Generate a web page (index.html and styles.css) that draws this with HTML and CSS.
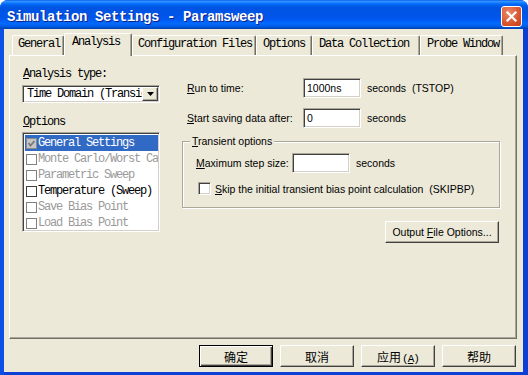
FILE: index.html
```html
<!DOCTYPE html>
<html lang="zh-CN">
<head>
  <meta charset="UTF-8" />
  <title>Simulation Settings - Paramsweep</title>
  <link rel="stylesheet" href="styles.css">
</head>
<body>
  <div class="window">
    <div class="titlebar">
      <span class="title">Simulation Settings - Paramsweep</span>
      <span class="close">
        <svg width="13" height="13" viewBox="0 0 13 13"><path d="M2.5 2.5 L10.5 10.5 M10.5 2.5 L2.5 10.5" stroke="#fff" stroke-width="2.2" stroke-linecap="square" fill="none"/></svg>
      </span>
    </div>

    <div class="client">
      <div class="tabs">
        <div class="tab tab-general">General</div>
        <div class="tab tab-analysis active">Analysis</div>
        <div class="tab tab-config">Configuration Files</div>
        <div class="tab tab-options">Options</div>
        <div class="tab tab-data">Data Collection</div>
        <div class="tab tab-probe">Probe Window</div>
      </div>

      <div class="panel">
        <div class="left">
          <div class="mono-label"><u>A</u>nalysis type:</div>
          <div class="select">
            <span class="select-text">Time Domain (Transient)</span>
            <span class="drop">
              <svg width="7" height="4" viewBox="0 0 7 4"><path d="M0 0 H7 L3.5 4 Z" fill="#000"/></svg>
            </span>
          </div>
          <div class="mono-label options-label"><u>O</u>ptions</div>
          <div class="listbox">
            <div class="item selected">
              <span class="cb checked">
                <svg width="9" height="9" viewBox="0 0 9 9"><path d="M1.5 4 L3.5 6.5 L7.5 2" stroke="#7a7a7a" stroke-width="1.8" fill="none"/></svg>
              </span>General Settings
            </div>
            <div class="item disabled"><span class="cb"></span>Monte Carlo/Worst Case</div>
            <div class="item disabled"><span class="cb"></span>Parametric Sweep</div>
            <div class="item"><span class="cb"></span>Temperature (Sweep)</div>
            <div class="item disabled"><span class="cb"></span>Save Bias Point</div>
            <div class="item disabled"><span class="cb"></span>Load Bias Point</div>
          </div>
        </div>

        <div class="right">
          <div class="row">
            <span class="field-label"><u>R</u>un to time:</span>
            <span class="input">1000ns</span>
            <span class="unit">seconds&nbsp; (TSTOP)</span>
          </div>
          <div class="row row-gap">
            <span class="field-label"><u>S</u>tart saving data after:</span>
            <span class="input">0</span>
            <span class="unit">seconds</span>
          </div>

          <div class="group">
            <div class="group-title"><u>T</u>ransient options</div>
            <div class="row">
              <span class="field-label short"><u>M</u>aximum step size:</span>
              <span class="input"></span>
              <span class="unit">seconds</span>
            </div>
            <div class="check-row">
              <span class="check"></span>
              <span><u>S</u>kip the initial transient bias point calculation&nbsp; (SKIPBP)</span>
            </div>
          </div>

          <div class="btn-row">
            <span class="btn output-btn"><span>Output <u>F</u>ile Options...</span></span>
          </div>
        </div>
      </div>

      <div class="footer">
        <span class="btn cjk default">确定</span>
        <span class="btn cjk">取消</span>
        <span class="btn cjk"><span>应用<span class="accel">(<u>A</u>)</span></span></span>
        <span class="btn cjk">帮助</span>
      </div>
    </div>
  </div>
</body>
</html>
```

FILE: styles.css
```css
* { box-sizing: border-box; }
body {
  margin: 0;
  width: 528px;
  height: 375px;
  overflow: hidden;
  background: #fff;
}
.window {
  width: 528px;
  height: 375px;
  display: flex;
  flex-direction: column;
  background: linear-gradient(to right, #0a50e4 0, #0a50e4 4px, #0b3fd6 4px);
  border-radius: 8px 8px 0 0;
  overflow: hidden;
}
.titlebar {
  height: 29px;
  flex: none;
  display: flex;
  align-items: center;
  padding: 4px 6px 0 7px;
  background: linear-gradient(to bottom, #0058ee 0%, #3593ff 4%, #288eff 7%, #127dff 10%, #036ffc 13%, #0262ee 17%, #0057e5 24%, #0054e3 30%, #0055eb 60%, #005bf5 70%, #026afe 80%, #0062ef 88%, #0052d6 94%, #0040ab 100%);
}
.title {
  flex: 1;
  font: bold 14px "Liberation Mono", monospace;
  letter-spacing: -0.4px;
  color: #fff;
  text-shadow: 1px 1px #0f1f86;
  white-space: nowrap;
}
.close {
  width: 21px;
  height: 21px;
  display: flex;
  align-items: center;
  justify-content: center;
  border: 1px solid #fff;
  border-radius: 3px;
  background: radial-gradient(circle at 35% 30%, #e98a6c, #d8542f 60%, #c23c17);
}

.client {
  flex: 1;
  margin: 0 5px 3px 4px;
  background: #ece9d8;
  display: flex;
  flex-direction: column;
}

/* tabs */
.tabs {
  display: flex;
  align-items: flex-end;
  height: 23px;
  margin-top: 4px;
  margin-bottom: -1px;
  padding-left: 8px;
  position: relative;
  z-index: 1;
}
.tab {
  height: 20px;
  margin-bottom: 1px;
  padding: 1px 0 0 5px;
  line-height: 14px;
  font-family: "Liberation Mono", monospace;
  font-size: 12px;
  letter-spacing: -1.2px;
  color: #000;
  background: #ece9d8;
  border-top: 1px solid #fff;
  border-left: 1px solid #fff;
  border-right: 1px solid #716f64;
  border-radius: 2px 2px 0 0;
  box-shadow: inset -1px 0 #aca899;
  white-space: nowrap;
}
.tab.active {
  height: 23px;
  margin-bottom: 0;
  padding-left: 7px;
}
.tab-general { width: 52px; }
.tab-analysis { width: 68px; }
.tab-config { width: 124px; }
.tab-options { width: 56px; padding-left: 6px; }
.tab-data { width: 108px; padding-left: 6px; }
.tab-probe { width: 83px; padding-left: 6px; }

.panel {
  height: 284px;
  margin: 0 6px 0 5px;
  display: flex;
  align-items: flex-start;
  border-top: 1px solid #fff;
  border-left: 1px solid #fff;
  border-right: 1px solid #716f64;
  border-bottom: 1px solid #716f64;
  box-shadow: inset -1px -1px #aca899;
}

/* left column */
.left {
  width: 138px;
  margin-left: 12px;
  padding-top: 11px;
}
.mono-label,
.select,
.listbox {
  font-family: "Liberation Mono", "Noto Sans CJK SC", monospace;
  font-size: 12px;
  letter-spacing: -1.2px;
}
.mono-label {
  line-height: 14px;
  padding-left: 1px;
  white-space: nowrap;
}
.select {
  margin-top: 4px;
  height: 18px;
  display: flex;
  background: #fff;
  border-top: 1px solid #aca899;
  border-left: 1px solid #aca899;
  border-right: 1px solid #fff;
  border-bottom: 1px solid #fff;
  box-shadow: inset 1px 1px #404040, inset -1px -1px #d4d0c8;
  padding: 1px;
}
.select-text {
  flex: 1;
  overflow: hidden;
  white-space: nowrap;
  line-height: 14px;
  padding-left: 3px;
}
.drop {
  width: 16px;
  height: 14px;
  display: flex;
  align-items: center;
  justify-content: center;
  background: #ece9d8;
  border-top: 1px solid #fff;
  border-left: 1px solid #fff;
  border-right: 1px solid #404040;
  border-bottom: 1px solid #404040;
  box-shadow: inset -1px -1px #aca899;
}
.options-label { margin-top: 12px; }
.listbox {
  margin-top: 3px;
  height: 100px;
  overflow: hidden;
  background: #fff;
  border-top: 1px solid #aca899;
  border-left: 1px solid #aca899;
  border-right: 1px solid #fff;
  border-bottom: 1px solid #fff;
  box-shadow: inset 1px 1px #404040, inset -1px -1px #d4d0c8;
  padding: 2px 1px 1px 2px;
}
.item {
  height: 16px;
  display: flex;
  align-items: center;
  white-space: nowrap;
  overflow: hidden;
  padding-left: 1px;
  color: #000;
}
.item.selected {
  background: #316ac5;
  color: #fff;
}
.item.disabled { color: #9a9a9a; }
.cb {
  width: 11px;
  height: 11px;
  flex: none;
  margin-right: 1px;
  border: 1px solid #808080;
  background: #fff;
  display: flex;
  align-items: center;
  justify-content: center;
}
.item:not(.disabled):not(.selected) .cb { border-color: #3c3c3c; }
.cb.checked {
  background: #c6c6c6;
  border-color: #8a8a8a;
}

/* right column */
.right {
  width: 318px;
  margin-left: 22px;
  padding-top: 22px;
  font-family: "Liberation Sans", Arial, sans-serif;
  font-size: 10.5px;
  color: #000;
}
.row {
  display: flex;
  align-items: center;
  height: 20px;
}
.row-gap { margin-top: 10px; }
.field-label {
  width: 121px;
  padding-left: 5px;
  white-space: nowrap;
}
.field-label.short {
  width: 96px;
  padding-left: 0;
}
.input {
  width: 58px;
  height: 20px;
  background: #fff;
  border-top: 1px solid #aca899;
  border-left: 1px solid #aca899;
  border-right: 1px solid #fff;
  border-bottom: 1px solid #fff;
  box-shadow: inset 1px 1px #404040, inset -1px -1px #d4d0c8;
  padding-left: 3px;
  line-height: 18px;
}
.unit {
  margin-left: 6px;
  white-space: nowrap;
}
.group {
  margin-top: 13px;
  height: 67px;
  border: 1px solid #aca899;
  box-shadow: inset 1px 1px #fff, 1px 1px #fff;
  padding: 0 0 0 13px;
}
.group-title {
  width: fit-content;
  margin: -7px 0 0 -6px;
  padding: 0 2px;
  line-height: 13px;
  background: #ece9d8;
}
.group .row { margin-top: 5px; }
.check-row {
  display: flex;
  align-items: center;
  height: 13px;
  margin-top: 9px;
  margin-left: 2px;
  white-space: nowrap;
}
.check {
  width: 13px;
  height: 13px;
  margin-right: 4px;
  background: #fff;
  border-top: 1px solid #aca899;
  border-left: 1px solid #aca899;
  border-right: 1px solid #fff;
  border-bottom: 1px solid #fff;
  box-shadow: inset 1px 1px #404040, inset -1px -1px #d4d0c8;
}
.btn-row {
  display: flex;
  justify-content: flex-end;
  margin-top: 13px;
  padding-right: 1px;
}

.btn {
  display: flex;
  align-items: center;
  justify-content: center;
  height: 22px;
  background: #ece9d8;
  border-top: 1px solid #fff;
  border-left: 1px solid #fff;
  border-right: 1px solid #404040;
  border-bottom: 1px solid #404040;
  box-shadow: inset -1px -1px #aca899;
  white-space: nowrap;
}
.output-btn { width: 114px; }

.footer {
  display: flex;
  justify-content: flex-end;
  gap: 7px;
  padding: 6px 7px 0 0;
}
.cjk {
  width: 74px;
  font-family: "Noto Sans CJK SC", sans-serif;
  font-size: 12px;
  color: #000;
}
.btn.default {
  border: 1px solid #000;
  box-shadow: inset 1px 1px #fff, inset -1px -1px #404040, inset -2px -2px #aca899;
}
.accel {
  font-family: "Liberation Mono", monospace;
  font-size: 11px;
  letter-spacing: -1px;
  margin-left: 1px;
}
```
